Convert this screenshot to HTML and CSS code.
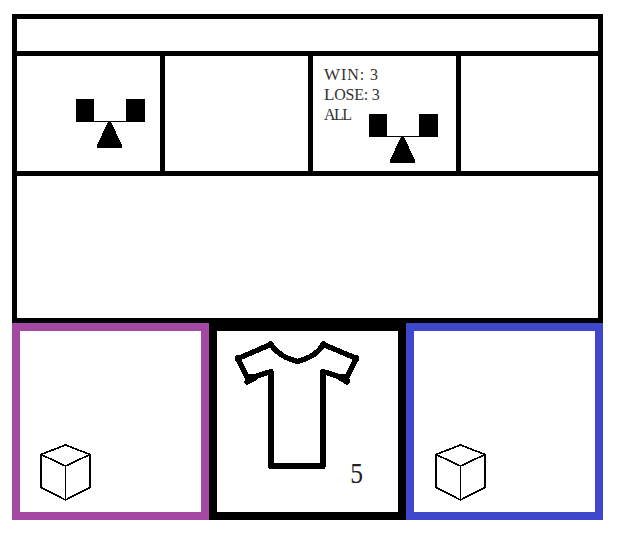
FILE: index.html
```
<!DOCTYPE html>
<html lang="en">
<head>
<meta charset="utf-8">
<title>Game board</title>
<link rel="stylesheet" href="styles.css">
</head>
<body>
<svg width="0" height="0" class="defs" aria-hidden="true">
  <symbol id="balance" viewBox="0 0 69 49">
    <path shape-rendering="crispEdges" d="M0 0h18v22h32v-22h19v23H0z"/>
    <path shape-rendering="crispEdges" d="M32 22.500h3L46 46.500V49H21v-2.500z"/>
  </symbol>
  <symbol id="cube" viewBox="0 0 52 57">
    <path fill="none" stroke="#000" stroke-width="1.700" shape-rendering="crispEdges" d="M25.500 1 1 10.500V43.500L25.500 56 50 43.500V10.500ZM1 10.500 25.500 22 50 10.500"/>
    <path shape-rendering="crispEdges" d="M25 22h1v34h-1z"/>
  </symbol>
</svg>
<main class="board">
  <section class="table">
    <div class="bar"></div>
    <div class="slots">
      <div class="slot"><svg class="balance" width="69" height="49"><use href="#balance"/></svg></div>
      <div class="slot"></div>
      <div class="slot rules">
        <div class="stakes">
          <p class="win"><b>W</b>IN: 3</p>
          <p class="lose"><b>L</b>OSE: 3</p>
          <p class="all">ALL</p>
        </div>
        <svg class="balance" width="69" height="49"><use href="#balance"/></svg>
      </div>
      <div class="slot"></div>
    </div>
    <div class="field"></div>
  </section>
  <section class="cards">
    <div class="card purple"><svg class="cube" width="52" height="57"><use href="#cube"/></svg></div>
    <div class="card black">
      <svg class="shirt" width="126" height="130" viewBox="234 340 126 130">
        <g shape-rendering="crispEdges">
          <path fill="none" stroke="#000" stroke-width="5.300" stroke-linejoin="round" d="M270.500 344.500 238 358.500 248 379 271 371.500V466H323V371.500L346 379 356.500 358.500 323.500 344.500C317 354 310 358 297.500 361.500C285 358 278 354 270.500 344.500Z"/>
          <path d="M246 374 259 374 257 380 247 385 244 383ZM348.500 374 335 374 337 379 347 385 350 382Z"/>
          <circle cx="238" cy="358.500" r="3.300"/><circle cx="356" cy="358.500" r="3.300"/>
          <circle cx="270.500" cy="344.500" r="3.300"/><circle cx="323.500" cy="344.500" r="3.300"/>
          <path d="M268 384h6v78h-6zM320 384h6v78h-6zM269 463h56l1 3-1 3h-56l-1-3z"/>
        </g>
      </svg>
      <span class="count">5</span>
    </div>
    <div class="card blue"><svg class="cube" width="52" height="57"><use href="#cube"/></svg></div>
  </section>
</main>
</body>
</html>
```
FILE: styles.css
```
* { box-sizing: border-box; }
body { margin: 0; background: #fff; color: #000; font-family: "Liberation Serif", serif; }
.defs { display: block; height: 0; }
.board { width: 591px; margin: 14px 0 0 12px; }
.table {
  display: grid;
  grid-template-rows: 32px 115px 142px;
  gap: 5px;
  padding: 5px;
  background: #000;
}
.bar, .slot, .field { background: #fff; }
.slots { display: grid; grid-template-columns: 143px 143px 143px 137px; gap: 5px; }
.slot { padding: 43px 0 0 59px; }
.balance, .cube, .shirt { display: block; flex: none; }
.rules { display: flex; padding: 9px 0 0 11px; }
.stakes { width: 45px; color: #333; white-space: nowrap; }
.stakes p { margin: 0; font-size: 16px; line-height: 20px; height: 20px; }
.stakes b { font-size: 17px; font-weight: 400; line-height: 1; }
.win { letter-spacing: .9px; }
.lose { letter-spacing: -.2px; }
.stakes .all { letter-spacing: -1.5px; }
.rules .balance { margin-top: 49px; }
.cards { display: grid; grid-template-columns: repeat(3, 197px); height: 197px; }
.card { display: flex; align-items: flex-start; border: 8px solid; }
.purple { border-color: #a349a4; }
.black { border-color: #000; padding: 9px 0 0 17px; }
.blue { border-color: #3f48cc; }
.cube { margin: 113px 0 0 20px; }
.blue .cube { margin-left: 21px; }
.count { margin: 117px 0 0 -11px; font-size: 30px; line-height: 32px; transform: scaleX(.85); color: #222; }
```
